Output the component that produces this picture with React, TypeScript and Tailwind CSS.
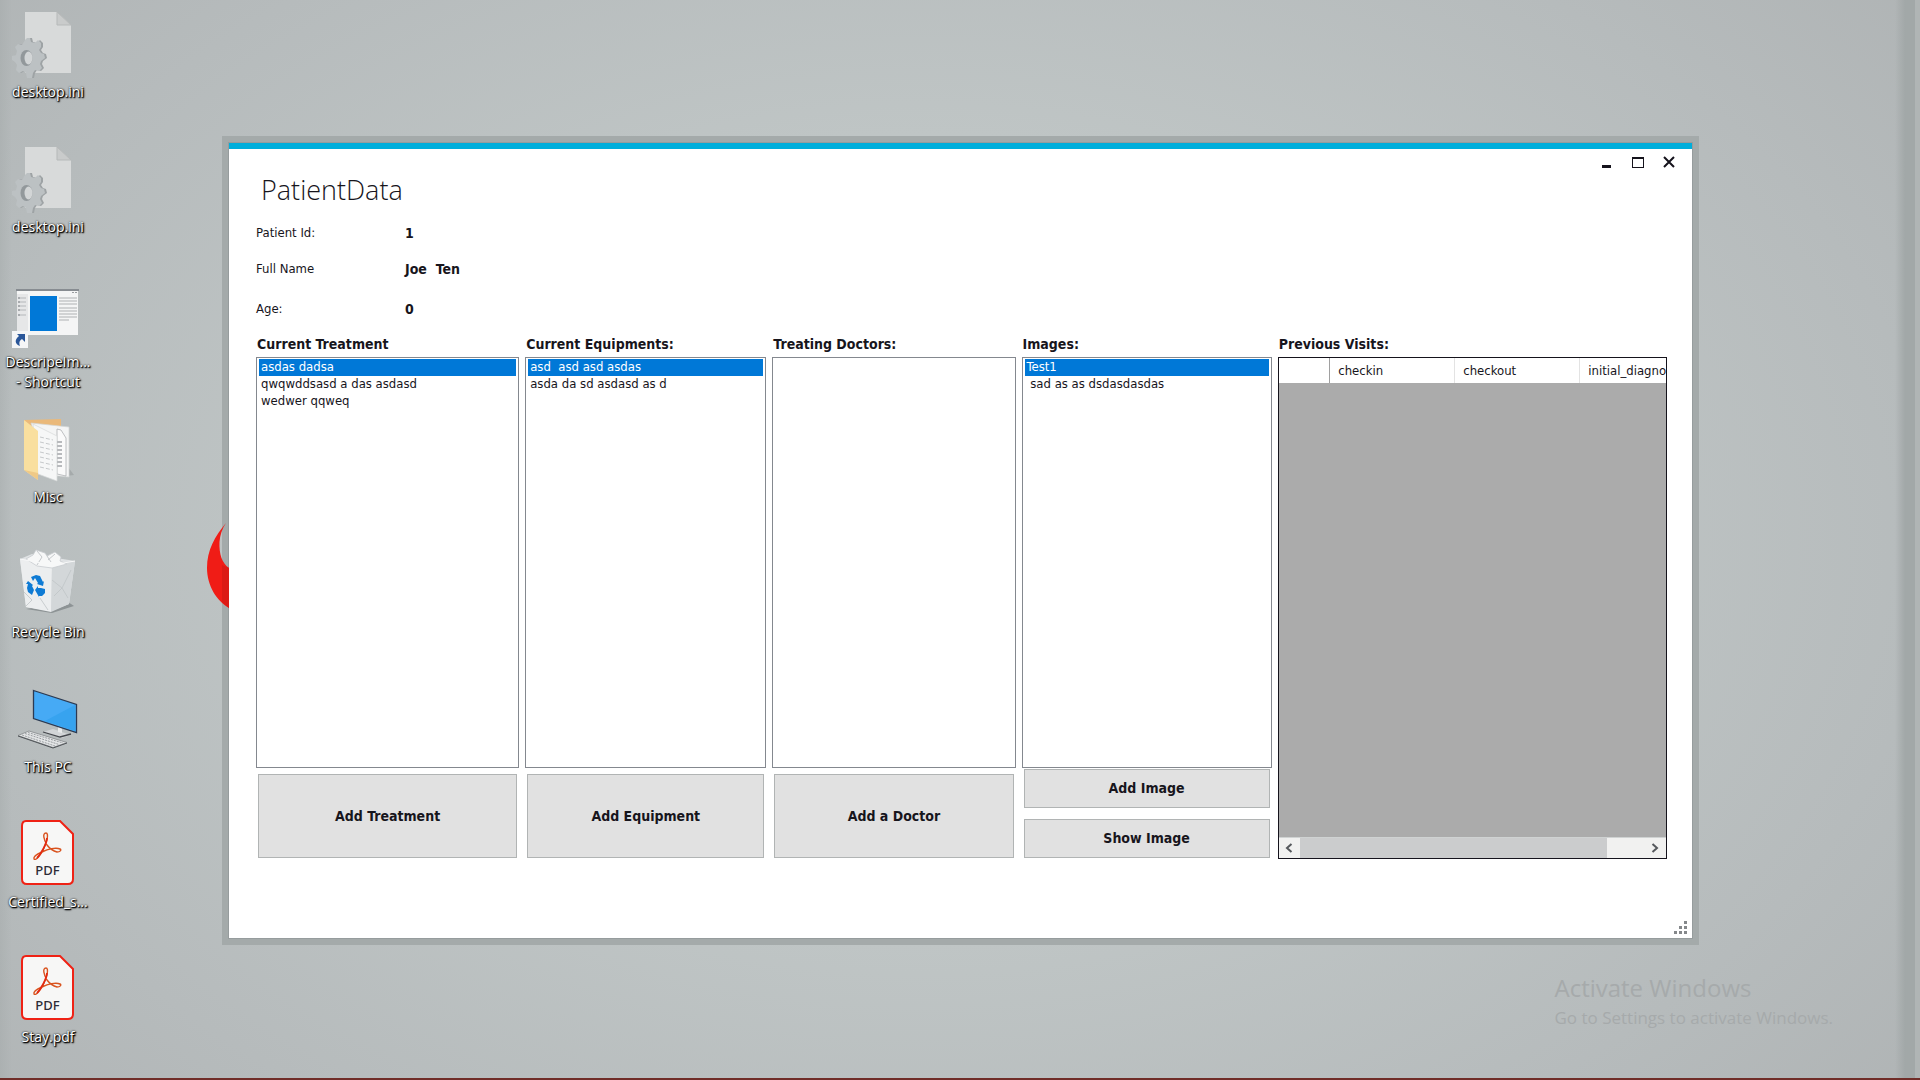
import type { ReactNode } from 'react';

const GEAR =
  'M25 40l2-2h3l1 4 4 1 3-3 3 3v4l-2 3 2 3 3 1 1 4-4 3-1 3 2 4-3 3-4-1-2 3-1 5-5 0-1-5-3-2-4 2-3-3 1-5-2-3-3-2v-4l4-1 1-4-2-4 3-3 4 1z';

function IniIcon() {
  return (
    <>
      <path d="M25 12H57L71 25V73H25z" fill="#d8dada" />
      <path d="M57 12L71 25H57z" fill="#c9cbcb" stroke="#b6b9b9" strokeWidth="1" />
      <path d={GEAR} fill="#9ea3a5" transform="translate(2 0)" />
      <path d={GEAR} fill="#bcc1c3" />
      <ellipse cx="26.500" cy="58" rx="6" ry="8" fill="#92989b" />
      <ellipse cx="28.500" cy="58" rx="4" ry="6.500" fill="#d2d5d6" />
    </>
  );
}

function ShortcutIcon() {
  return (
    <>
      <rect x="17" y="19" width="61" height="46" fill="#f4f5f5" />
      <rect x="16" y="19" width="63" height="2" fill="#878c91" />
      <rect x="17" y="24" width="11" height="41" fill="#e6e7e8" />
      <path d="M18 28h8M18 32h8M18 36h8M18 40h8M18 45h8" stroke="#b4b7ba" />
      <path d="M18 28h2M18 32h2M18 36h2M18 40h2M18 45h2" stroke="#84888c" />
      <rect x="30" y="26" width="27" height="35" fill="#0078d7" />
      <path d="M59 28h18M59 31h18M59 34h18M59 38h18M59 41h18M59 44h18M59 47h18M59 50h10" stroke="#aeb1b3" />
      <path d="M72 22.500h2M75 22.500h2" stroke="#9a9da0" />
      <rect x="12" y="61" width="16" height="17" fill="#f5f6f7" />
      <path d="M17 64h8v8l-3-3c-3 2-3 4-2 7-5-2-6-6-1-10z" fill="#2a5699" />
    </>
  );
}

function FolderIcon() {
  return (
    <>
      <path d="M58 72l16-2-6-8z" fill="#a5aaab" />
      <path d="M24 15L61 14V60L38 70z" fill="#eab97a" />
      <path d="M31 18l38 4v50l-22-2z" fill="#f4f5f5" stroke="#d3d5d5" strokeWidth=".7" />
      <path d="M57 24l4 1 5 8v38l-9-2z" fill="#fafafa" stroke="#a5a8aa" strokeWidth=".7" />
      <path d="M56 37h6M56 41h6M56 45h6M56 49h6M56 53h6M56 57h6M56 61h6" stroke="#777b80" />
      <path d="M33 19l24 12v45l-19-7z" fill="#f6f7f7" stroke="#d6d8d8" strokeWidth=".7" />
      <path d="M40 32l13 3M40 37l13 3M40 42l13 3M40 47l13 3M40 52l13 3M40 57l13 3M40 62l13 3" stroke="#c6c9cb" strokeDasharray="4 2" />
      <path d="M24 15l14 11v49L24 65z" fill="#f9df9f" />
      <path d="M24 65l14 10v-7z" fill="#efc987" />
    </>
  );
}

function RecycleIcon() {
  return (
    <>
      <path d="M26 69l26 4 22-7-6-4z" fill="#8d9395" />
      <path d="M20 19l12-5 43 7-6 43-18 7-25-4z" fill="#e0e3e5" />
      <path d="M20 19l32 5-1 48-25-5z" fill="#eceeef" />
      <path d="M52 24l23-3-6 43-18 8z" fill="#d3d7d9" />
      <path d="M26 19l7-4 3-5 9 3 2 3 8-4 6 5-1 4 7 3-15 4-15-2z" fill="#f7f8f8" stroke="#c8cccf" strokeWidth=".8" />
      <path d="M37 11l5 6-5 8M47 16l4 6M55 14l-7 6" stroke="#c5c9cc" fill="none" />
      <path d="M20 19l32 6 23-4" stroke="#f8f9f9" fill="none" />
      <path d="M52 40l10 8-8 8M71 30l-9 18 6 10M24 52l8 8-6 6M40 58l8 12" stroke="#bfc4c7" strokeWidth=".8" fill="none" />
      <g fill="#0f7bd4">
        <path d="M31 37l5-2 4 1 3 6 1-1-1 5-6-2 1-1-3-5-2 3z" />
        <path d="M28 41l5 4-1 1 2 4-2 5-4-3-1-4 1-4-2 0z" />
        <path d="M35 50l3-4v2h3l4 1 0 4-3 3h-3v1z" />
      </g>
    </>
  );
}

function PcIcon() {
  return (
    <>
      <path d="M43 57l10-3 18 6-9 3z" fill="#d2d5d7" />
      <path d="M43 57l17 5 11-3" stroke="#45484d" strokeWidth="1.300" fill="none" />
      <path d="M58 51l4 2v5l-4-1z" fill="#e8eaeb" />
      <path d="M33.500 15.500L76.500 29.500V57.500L33.500 43.500z" fill="#46aaf5" stroke="#2c3a52" strokeWidth="1.300" />
      <path d="M75 30V56L45 46z" fill="#37a3ef" />
      <path d="M18 60.500L29 56L67 67.500L53 72.500z" fill="#e3e5e6" stroke="#85898c" strokeWidth=".8" />
      <path d="M22 60l33 11M25 58.500l34 11M28 57.500l35 10.500" stroke="#9a9ea1" strokeWidth="1" strokeDasharray="2 1" />
      <path d="M18 61l35 12 14-5" stroke="#505458" fill="none" />
    </>
  );
}

function PdfIcon() {
  return (
    <>
      <path
        d="M26 11H60L73 24V69Q73 74 68 74H27Q22 74 22 69V16Q22 11 26 11z"
        fill="#f7f7f6"
        stroke="#ef2215"
        strokeWidth="2"
      />
      <path
        d="M46 23c-4 0-2 7 1 12 3 4 6 6 10 7 3 0 5-2 3-3-4-2-12 0-18 3-5 2-9 4-8 7 2 2 7-4 10-11 3-6 5-15 2-15z"
        fill="none"
        stroke="#d9531e"
        strokeWidth="1.400"
      />
      <path d="M47 28c0 5-6 16-10 20" stroke="#e32a12" strokeWidth="1.800" fill="none" />
      <text x="47.500" y="65" textAnchor="middle" fontSize="13" fontWeight="500" fill="#2c2c36" fontFamily='"Noto Sans", sans-serif'>
        PDF
      </text>
    </>
  );
}

const desktopItems: { label: string[]; icon: ReactNode }[] = [
  { label: ['desktop.ini'], icon: <IniIcon /> },
  { label: ['desktop.ini'], icon: <IniIcon /> },
  { label: ['DescripeIm...', '- Shortcut'], icon: <ShortcutIcon /> },
  { label: ['Misc'], icon: <FolderIcon /> },
  { label: ['Recycle Bin'], icon: <RecycleIcon /> },
  { label: ['This PC'], icon: <PcIcon /> },
  { label: ['Certified_s...'], icon: <PdfIcon /> },
  { label: ['Stay.pdf'], icon: <PdfIcon /> },
];

function DesktopIcons() {
  return (
    <nav aria-label="Desktop" className="w-24 shrink-0">
      {desktopItems.map((item, i) => (
        <button
          key={i}
          type="button"
          className="flex h-[135px] w-full flex-col items-center text-[14px] leading-5 text-white [text-shadow:0_0_2px_#000,1px_1px_2px_#000,1px_1px_1px_#000] last:h-[120px]"
        >
          <svg viewBox="8 0 80 82" className="h-[82px] w-20 shrink-0 [text-shadow:none]" aria-hidden="true">
            {item.icon}
          </svg>
          {item.label.map((line) => (
            <span key={line} className="whitespace-nowrap">
              {line}
            </span>
          ))}
        </button>
      ))}
    </nav>
  );
}

function ListColumn({
  id,
  title,
  items,
  children,
}: {
  id: string;
  title: string;
  items: string[];
  children: ReactNode;
}) {
  return (
    <div className="flex min-w-0 flex-col">
      <label htmlFor={id} className="mb-1 h-[18px] pl-px text-[14px] leading-[18px] font-bold whitespace-nowrap">
        {title}
      </label>
      <select
        id={id}
        size={24}
        defaultValue={items[0]}
        className="h-[411px] w-full overflow-hidden border border-[#84888f] bg-white px-[2px] py-px text-[13px] outline-none"
      >
        {items.map((item) => (
          <option
            key={item}
            value={item}
            className="h-[17px] min-h-0 p-0 pl-[2px] leading-[17px] whitespace-pre checked:bg-[linear-gradient(#0078d7,#0078d7)] checked:[-webkit-text-fill-color:#fff]"
          >
            {item}
          </option>
        ))}
      </select>
      {children}
    </div>
  );
}

function PushButton({ tall, children }: { tall?: boolean; children: ReactNode }) {
  return (
    <button
      type="button"
      className={`${tall ? 'h-[84px]' : 'h-[39px]'} w-full border border-[#b1b4b4] bg-[#e1e1e1] text-[14px] font-bold`}
    >
      {children}
    </button>
  );
}

function VisitsGrid() {
  return (
    <div className="flex min-w-0 flex-col">
      <h2 id="visits" className="mb-1 h-[18px] pl-px text-[14px] leading-[18px] font-bold">
        Previous Visits:
      </h2>
      <div className="flex h-[502px] flex-col overflow-hidden border border-[#15131c] bg-[#ababab]">
        <div className="min-h-0 flex-1 overflow-hidden">
          <table aria-labelledby="visits" className="w-full table-fixed border-collapse bg-white text-[13px]">
            <thead>
              <tr className="h-[25px]">
                <th className="w-[51px] border-r border-[#a0a0a0]" />
                <th className="w-[125px] border-r border-[#e3e3e3] pl-2 text-left font-normal">checkin</th>
                <th className="w-[125px] border-r border-[#e3e3e3] pl-2 text-left font-normal">checkout</th>
                <th className="pl-2 text-left font-normal whitespace-nowrap">initial_diagno</th>
              </tr>
            </thead>
          </table>
        </div>
        <div className="flex h-[21px] shrink-0 border-t border-[#cfd2d2] bg-[#f1f1f0]">
          <button type="button" aria-label="Scroll left" className="flex w-[21px] items-center justify-center">
            <svg viewBox="0 0 8 10" className="h-[10px] w-2" fill="none" stroke="#55585c" strokeWidth="2">
              <path d="M6.500 1L2 5L6.500 9" />
            </svg>
          </button>
          <div className="flex-1">
            <div className="h-full w-[89%] bg-[#cbcccd]" />
          </div>
          <button type="button" aria-label="Scroll right" className="flex w-[21px] items-center justify-center">
            <svg viewBox="0 0 8 10" className="h-[10px] w-2" fill="none" stroke="#55585c" strokeWidth="2">
              <path d="M1.500 1L6 5L1.500 9" />
            </svg>
          </button>
        </div>
      </div>
    </div>
  );
}

function WindowControls() {
  return (
    <div className="flex h-[26px] pr-2">
      <button type="button" aria-label="Minimize" className="flex w-[31px] items-center justify-center">
        <svg viewBox="0 0 14 14" className="size-[14px]">
          <path d="M2 11.500h9" stroke="#15131c" strokeWidth="3" />
        </svg>
      </button>
      <button type="button" aria-label="Maximize" className="flex w-[31px] items-center justify-center">
        <svg viewBox="0 0 14 14" className="size-[14px]" fill="none" stroke="#15131c">
          <path d="M1.500 2v10M12.500 2v10M1 12.500h12" />
          <path d="M1 3h12" strokeWidth="2" />
        </svg>
      </button>
      <button type="button" aria-label="Close" className="flex w-[31px] items-center justify-center">
        <svg viewBox="0 0 14 14" className="size-[14px]">
          <path d="M2 2L12 12M12 2L2 12" stroke="#15131c" strokeWidth="2" />
        </svg>
      </button>
    </div>
  );
}

function PatientWindow() {
  return (
    <section className='relative flex min-h-[809px] flex-col border-[6px] border-[#a4aaaa] bg-white p-px font-["DejaVu_Sans_Condensed","DejaVu_Sans",sans-serif] text-[#17151c] shadow-[inset_0_0_0_1px_#969c9d]'>
      <svg viewBox="0 0 22 86" className="absolute top-[380px] -left-[21px] h-[86px] w-[22px]" aria-hidden="true">
        <path d="M19 1C8 14 0 28 0 46C0 64 10 79 22 86V46C15 41 12 32 12.500 20C13 13 15 7 19 1z" fill="#f01c16" />
        <path d="M15 43L22 46V86L15 80z" fill="#dc1a15" />
      </svg>
      <div className="h-[6px] bg-[#00aedb]" />
      <header className="flex items-start justify-between">
        <h1 className='pt-[21px] pl-8 font-["Open_Sans",sans-serif] text-[27px] leading-10 font-light'>PatientData</h1>
        <WindowControls />
      </header>
      <dl className="mt-[13px] ml-[27px] grid grid-cols-[149px_1fr] gap-y-4 leading-5">
        <dt className="text-[13px]">Patient Id:</dt>
        <dd className="text-[14px] font-bold">1</dd>
        <dt className="text-[13px]">Full Name</dt>
        <dd className="text-[14px] font-bold whitespace-pre">Joe  Ten</dd>
        <dt className="pt-1 text-[13px]">Age:</dt>
        <dd className="pt-1 text-[14px] font-bold">0</dd>
      </dl>
      <div className="mt-4 mr-[25px] ml-[27px] grid grid-cols-[263fr_241fr_243fr_250fr_389fr] gap-x-[6px]">
        <ListColumn id="treatments" title="Current Treatment" items={['asdas dadsa', 'qwqwddsasd a das asdasd', 'wedwer qqweq']}>
          <div className="px-[2px] pt-[6px]">
            <PushButton tall>Add Treatment</PushButton>
          </div>
        </ListColumn>
        <ListColumn id="equipments" title="Current Equipments:" items={['asd\u00a0 asd asd asdas', 'asda da sd asdasd as d']}>
          <div className="px-[2px] pt-[6px]">
            <PushButton tall>Add Equipment</PushButton>
          </div>
        </ListColumn>
        <ListColumn id="doctors" title="Treating Doctors:" items={[]}>
          <div className="px-[2px] pt-[6px]">
            <PushButton tall>Add a Doctor</PushButton>
          </div>
        </ListColumn>
        <ListColumn id="images" title="Images:" items={['Test1', '\u00a0sad as as dsdasdasdas']}>
          <div className="flex flex-col gap-[11px] px-[2px] pt-px">
            <PushButton>Add Image</PushButton>
            <PushButton>Show Image</PushButton>
          </div>
        </ListColumn>
        <VisitsGrid />
      </div>
      <svg viewBox="0 0 13 13" className="mt-auto mr-[5px] mb-1 size-[13px] self-end" fill="#85888b" aria-hidden="true">
        <path d="M10 0h3v3h-3zM5 5h3v3h-3zM10 5h3v3h-3zM0 10h3v3h-3zM5 10h3v3h-3zM10 10h3v3h-3z" />
      </svg>
    </section>
  );
}

export default function App() {
  return (
    <main className='flex min-h-screen overflow-hidden border-b-2 border-[#702d28] bg-[radial-gradient(ellipse_62%_75%_at_48%_50%,#c3c9c8_0%,#bfc5c5_50%,#b6bbbc_85%,#aeb2b3_115%)] font-["Open_Sans","Noto_Sans",sans-serif]'>
      <div className="flex min-w-0 flex-1 bg-[linear-gradient(90deg,#a2a8a866_0,#a2a8a800_12px)]">
        <DesktopIcons />
        <div className="flex min-w-0 flex-1 flex-col pt-[136px] pl-[126px]">
          <div className="pr-[196px]">
            <PatientWindow />
          </div>
          <aside className="mt-[25px] mr-[62px] self-end text-[#a6aaab]">
            <p className="text-[24px] leading-9">Activate Windows</p>
            <p className="text-[17px] leading-6">Go to Settings to activate Windows.</p>
          </aside>
        </div>
      </div>
      <div className="w-[25px] bg-[linear-gradient(90deg,#a2a8a800,#a2a8a8_40%,#a2a8a8_80%,#b0b5b5_80%)]" />
    </main>
  );
}
